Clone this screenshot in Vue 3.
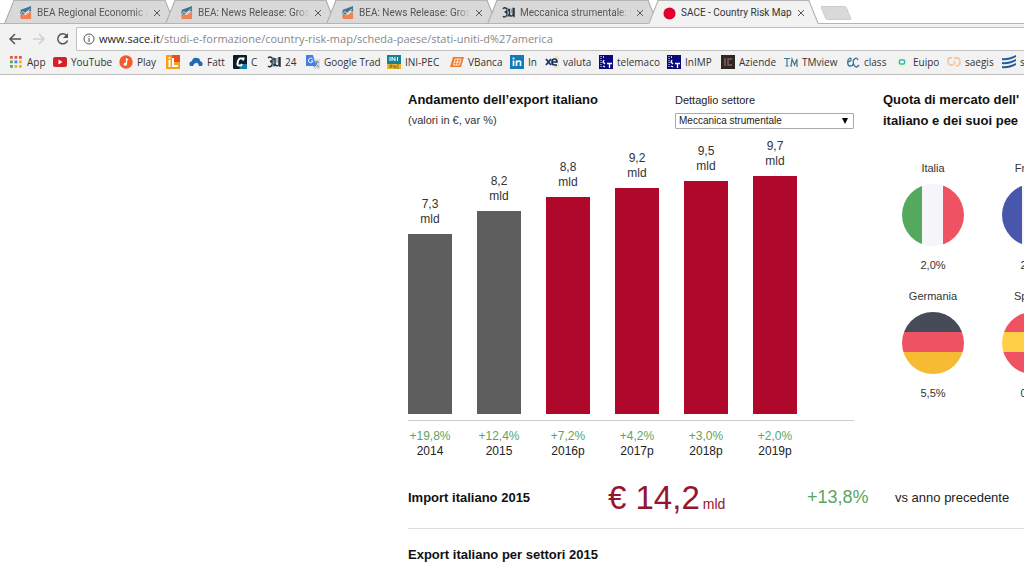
<script setup>
import { ref } from 'vue'

const tabs = [
  { title: 'BEA Regional Economic Accounts', icon: 'bea' },
  { title: 'BEA: News Release: Gross Domestic', icon: 'bea' },
  { title: 'BEA: News Release: Gross Domestic', icon: 'bea' },
  { title: 'Meccanica strumentale: il made', icon: 'sole' },
  { title: 'SACE - Country Risk Map', icon: 'sace', active: true },
]

const bookmarks = [
  { label: 'App', icon: 'apps', width: 44 },
  { label: 'YouTube', icon: 'youtube', width: 66 },
  { label: 'Play', icon: 'play', width: 47 },
  { label: '', icon: 'il', width: 23 },
  { label: 'Fatt', icon: 'cloud', width: 44 },
  { label: 'C', icon: 'c', width: 34 },
  { label: '24', icon: 'sole', width: 39 },
  { label: 'Google Trad', icon: 'translate', width: 81 },
  { label: 'INI-PEC', icon: 'ini', width: 63 },
  { label: 'VBanca', icon: 'vbanca', width: 60 },
  { label: 'In', icon: 'linkedin', width: 35 },
  { label: 'valuta', icon: 'xe', width: 54 },
  { label: 'telemaco', icon: 'telemaco', width: 68 },
  { label: 'InIMP', icon: 'telemaco', width: 54 },
  { label: 'Aziende', icon: 'ic', width: 63 },
  { label: 'TMview', icon: 'tm', width: 62 },
  { label: 'class', icon: 'ec', width: 49 },
  { label: 'Euipo', icon: 'euipo', width: 52 },
  { label: 'saegis', icon: 'saegis', width: 55 },
  { label: 'services', icon: 'waves', width: 60 },
]

const years = [
  { year: '2014', value: '7,3', change: '+19,8%', height: 180 },
  { year: '2015', value: '8,2', change: '+12,4%', height: 203 },
  { year: '2016p', value: '8,8', change: '+7,2%', height: 217, forecast: true },
  { year: '2017p', value: '9,2', change: '+4,2%', height: 226, forecast: true },
  { year: '2018p', value: '9,5', change: '+3,0%', height: 233, forecast: true },
  { year: '2019p', value: '9,7', change: '+2,0%', height: 238, forecast: true },
]

const peers = [
  { name: 'Italia', share: '2,0%', flag: 'italy' },
  { name: 'Francia', share: '2,1%', flag: 'france' },
  { name: 'Germania', share: '5,5%', flag: 'germany' },
  { name: 'Spagna', share: '0,6%', flag: 'spain' },
]

const sector = ref('Meccanica strumentale')
const address = 'www.sace.it/studi-e-formazione/country-risk-map/scheda-paese/stati-uniti-d%27america'
const host = address.slice(0, 11)
const path = address.slice(11)
const dots = [0, 1, 2, 3, 4, 5, 6, 7, 8]
const dotColors = ['#e2574c', '#e2574c', '#e2574c', '#4caf50', '#4285f4', '#f4b400', '#4caf50', '#f4b400', '#f4b400']
</script>

<template>
  <div class="window">
    <svg class="defs" width="0" height="0" aria-hidden="true">
      <symbol id="i-bea" viewBox="0 0 14 14">
        <path d="M2 4 8 2 13 0V6L9 5 5 9 1 10Z" fill="#3b7795" />
        <path d="M1 10 5 9 7 10 12 6 13 7V14H2Z" fill="#ef8354" />
        <path d="M1 10 4 6 7 8 12 3" fill="none" stroke="#e6dcd8" stroke-width="1" />
      </symbol>
      <symbol id="i-sole" viewBox="0 0 14 14">
        <path d="M1 3Q3 1 5 3T3 6.500Q7 7 5 10T1 11M7 3 5 8 8 11M8 3V9Q9 12 12 10V2M13 2V12" fill="none" stroke="#26343f" stroke-width="1.500" />
        <path d="M6 2V12M10 3V8" stroke="#688da0" stroke-width="1" />
      </symbol>
      <symbol id="i-sace" viewBox="0 0 14 14"><circle cx="7" cy="7" r="6.500" fill="#e4002b" /></symbol>
      <symbol id="i-apps" viewBox="0 0 14 14">
        <rect v-for="n in dots" :key="n" :x="1 + (n % 3) * 4.500" :y="1 + Math.floor(n / 3) * 4.500" width="2.800" height="2.800" :fill="dotColors[n]" />
      </symbol>
      <symbol id="i-youtube" viewBox="0 0 14 14"><rect y="2" width="14" height="10" rx="2" fill="#d3222a" /><path d="M5.500 4.500 9.500 7 5.500 9.500Z" fill="#fff" /></symbol>
      <symbol id="i-play" viewBox="0 0 14 14"><circle cx="7" cy="7" r="6.700" fill="#f45b28" /><path d="M7.500 3V9M7.500 3.500 9 5" stroke="#fff" fill="none" stroke-width="1.200" /><circle cx="6.300" cy="9.200" r="1.600" fill="#fff" /></symbol>
      <symbol id="i-il" viewBox="0 0 14 14"><path d="M0 0H14V14H0Z" fill="#f6a11c" /><path d="M6 0H14V7H6Z" fill="#e9501e" /><path d="M3.500 5V12M7 3V11H12" fill="none" stroke="#fff" stroke-width="2" /><circle cx="3.500" cy="3" r="1" fill="#fff" /></symbol>
      <symbol id="i-cloud" viewBox="0 0 14 14"><path d="M1 11Q-1 7 3 6Q4 2 8 3Q11 3 11 6Q15 7 13 11H10Q9 7 7 8Q5 8 4 11Z" fill="#2368b1" /></symbol>
      <symbol id="i-c" viewBox="0 0 14 14"><rect width="14" height="14" rx="1" fill="#0b1c2e" /><path d="M9 9H14V14H6Z" fill="#1380a5" /><path d="M10 5.500 10.500 3.500H7Q5 4 4.500 9Q4 11 8 10.500L9 9" fill="none" stroke="#fff" stroke-width="2" /></symbol>
      <symbol id="i-translate" viewBox="0 0 14 14"><path d="M5 4H14V14H8Z" fill="#d6dce5" /><path d="M8 7H13M11 6Q11 10 8 12M9 8Q11 11 13 12" stroke="#718096" fill="none" /><path d="M0 0H7L10 11H0Z" fill="#4280e8" /><path d="M6.500 4A2.300 2.300 0 1 0 7 6H5" stroke="#fff" fill="none" /></symbol>
      <symbol id="i-ini" viewBox="0 0 14 14"><path d="M0 0H14V9H0Z" fill="#138394" /><path d="M0 9H14V14H0Z" fill="#e7b52b" /><path d="M3 2V6M5 6V2L8 6V2M10.500 2V6" stroke="#fff" fill="none" /><path d="M3 13V10H5V12H3M7 10V13H9M7 11.500H9M12 10H10V13H12" stroke="#715d22" fill="none" stroke-width=".7" /></symbol>
      <symbol id="i-vbanca" viewBox="0 0 14 14"><path d="M3 2H14L11 12H0Z" fill="#ef792d" /><path d="M5 4H11L9.500 10H3.500ZM8 4 6.500 10M4.500 7H10" fill="none" stroke="#fff" stroke-width=".8" /></symbol>
      <symbol id="i-linkedin" viewBox="0 0 14 14"><rect width="14" height="14" fill="#1479b8" /><path d="M3.500 5.500V11M6.500 11V5.500M6.500 8Q7 6 9 6T10.500 8V11" fill="none" stroke="#fff" stroke-width="1.700" /><circle cx="3.500" cy="3.500" r="1" fill="#fff" /></symbol>
      <symbol id="i-xe" viewBox="0 0 14 14"><path d="M10 2A5 5 0 0 1 10 12" fill="none" stroke="#edcc62" /><path d="M1 4 6 10M6 4 1 10M7 7H12Q12 4 9.500 4T7 7Q7 10 9.500 10H12" fill="none" stroke="#19305b" stroke-width="1.700" /></symbol>
      <symbol id="i-telemaco" viewBox="0 0 14 14"><path d="M0 0H14V14H0Z" fill="#07087c" /><path d="M2 1V13" stroke="#fff" stroke-dasharray="1 1" /><path d="M4 2H5M5 5 4 7 6 9M4 11 6 12M8 8.500H13M10.500 8.500V13" fill="none" stroke="#fff" stroke-width="1.300" /></symbol>
      <symbol id="i-ic" viewBox="0 0 14 14"><path d="M0 0H14V14H0Z" fill="#302724" /><path d="M4 3V11M11 4H7V10H11" fill="none" stroke="#806159" stroke-width="1.500" /></symbol>
      <symbol id="i-tm" viewBox="0 0 14 14"><path d="M0 3.500H6M3 3.500V11M1.500 11H4.500M7 11 8 4 10.500 10 13 4V11M6 11H8M12 11H14" fill="none" stroke="#447b98" stroke-width="1.200" /></symbol>
      <symbol id="i-ec" viewBox="0 0 14 14"><path d="M1.500 7Q6 6 5 4T2 5Q1 11 4 11T7 9M12 5Q11 2 8.500 4T8 10T13 10" fill="none" stroke="#376f91" stroke-width="1.300" /></symbol>
      <symbol id="i-euipo" viewBox="0 0 14 14"><circle cx="7" cy="7" r="5.500" fill="#eef6d0" /><rect x="4.500" y="5" width="5" height="4" rx="1" fill="#fff" stroke="#35b5c6" stroke-width="1.500" /></symbol>
      <symbol id="i-saegis" viewBox="0 0 14 14"><path d="M5 3H3Q1 3 1 6T3 10H6M7 10Q8 8 7 6M7 3H11Q13 4 13 7T10 11H9" fill="none" stroke="#f7c7a0" stroke-width="1.800" /></symbol>
      <symbol id="i-waves" viewBox="0 0 14 14"><path d="M0 3Q5 4 14 0V2Q6 6 0 5ZM0 7Q5 8 14 4V6Q6 10 0 9ZM0 11Q5 12 14 8V10Q6 14 0 13Z" fill="#245b9f" /></symbol>
    </svg>

    <header class="browser">
      <nav class="tabs" aria-label="Schede">
        <div v-for="(tab, i) in tabs" :key="i" class="tab" :class="{ active: tab.active }">
          <svg class="favicon"><use :href="'#i-' + tab.icon" /></svg>
          <a class="tab-title" href="#">{{ tab.title }}</a>
          <button class="close" aria-label="Chiudi scheda"><svg viewBox="0 0 8 8"><path d="M1 1 7 7M7 1 1 7" /></svg></button>
        </div>
        <button class="new-tab" aria-label="Nuova scheda"></button>
      </nav>

      <div class="toolbar">
        <div class="nav-group">
          <button class="nav" aria-label="Indietro"><svg viewBox="0 0 14 14"><path d="M13 7H2M7 2 2 7 7 12" /></svg></button>
          <button class="nav disabled" aria-label="Avanti"><svg viewBox="0 0 14 14"><path d="M1 7H12M7 2 12 7 7 12" /></svg></button>
          <button class="nav" aria-label="Ricarica"><svg viewBox="0 0 14 14"><path d="M10.500 3.500A5 5 0 1 0 11.500 8.500" /><path class="tip" d="M12 1V6H7Z" /></svg></button>
        </div>
        <div class="address">
          <svg class="info" viewBox="0 0 12 12"><circle cx="6" cy="6" r="5" /><path d="M6 5V9M6 3V4" /></svg>
          <a class="url" href="#"><span class="host">{{ host }}</span>{{ path }}</a>
        </div>
      </div>

      <nav class="bookmarks" aria-label="Preferiti">
        <a v-for="b in bookmarks" :key="b.label" class="bookmark" href="#" :style="{ width: b.width + 'px' }">
          <svg class="bookmark-icon"><use :href="'#i-' + b.icon" /></svg>
          <span>{{ b.label }}</span>
        </a>
      </nav>
    </header>

    <main class="page">
      <div class="overview">
        <section class="export">
          <div class="export-head">
            <div>
              <h2>Andamento dell’export italiano</h2>
              <p class="unit">(valori in €, var %)</p>
            </div>
            <div class="sector">
              <label for="sector">Dettaglio settore</label>
              <div class="select-box">
                <select id="sector" v-model="sector"><option>Meccanica strumentale</option></select>
                <svg class="arrow" viewBox="0 0 6 6"><path d="M0 0H6L3 6Z" /></svg>
              </div>
            </div>
          </div>
          <div class="bars">
            <div v-for="y in years" :key="y.year" class="column">
              <div class="value">{{ y.value }}<br />mld</div>
              <div class="bar" :class="{ forecast: y.forecast }" :style="{ height: y.height + 'px' }"></div>
            </div>
          </div>
          <div class="axis">
            <div v-for="y in years" :key="y.year" class="tick">
              <div class="change">{{ y.change }}</div>
              <div>{{ y.year }}</div>
            </div>
          </div>
        </section>

        <section class="share">
          <h2>Quota di mercato dell'<br />italiano e dei suoi pee</h2>
          <div class="peers">
            <div v-for="p in peers" :key="p.name" class="peer">
              <div class="peer-text">{{ p.name }}</div>
              <div class="flag" :class="p.flag"></div>
              <div class="peer-text">{{ p.share }}</div>
            </div>
          </div>
        </section>
      </div>

      <section class="import">
        <h2>Import italiano 2015</h2>
        <div class="amount">€ 14,2<small>mld</small></div>
        <div class="growth">+13,8%</div>
        <div class="versus">vs anno precedente</div>
      </section>

      <section class="sectors"><h2>Export italiano per settori 2015</h2></section>
    </main>
  </div>
</template>

<style>
body { margin: 0; background: #fff; }
</style>

<style scoped>
.window { min-height: 100vh; overflow: hidden; background: #fff; color: #222; font-family: "Liberation Sans", Arial, sans-serif; }
.defs { position: absolute; }
button { border: 0; padding: 0; background: none; }
a { color: inherit; text-decoration: none; }
h2, p { margin: 0; }
h2 { color: #111; font-size: 13px; line-height: 21px; font-weight: 700; white-space: nowrap; }
.browser { background: #f2f2f2; border-bottom: 1px solid #bdbdbd; font-family: "Open Sans", "Noto Sans", sans-serif; }

.tabs { display: flex; height: 23px; padding-left: 4px; background: #fff; border-bottom: 1px solid #b5b5b5; }
.tab { position: relative; z-index: 0; flex: none; display: flex; align-items: center; box-sizing: border-box; width: 171px; height: 23px; margin-right: -10px; padding: 2px 14px 0 15px; color: #555; }
.tab::before, .tab::after { content: ""; position: absolute; z-index: -1; top: 0; bottom: 0; box-sizing: border-box; background: #d9d9d9; border-top: 1px solid #b5b5b5; }
.tab::before { left: 5px; right: 40%; border-left: 1px solid #a8a8a8; transform: skewX(-22deg); }
.tab::after { left: 40%; right: 5px; border-right: 1px solid #a8a8a8; transform: skewX(22deg); }
.tab.active { z-index: 1; height: 24px; color: #333; }
.tab.active::before, .tab.active::after { background: #f2f2f2; }
.favicon { width: 13px; height: 13px; margin-right: 5px; flex: none; }
.tab-title { flex: 1; overflow: hidden; white-space: nowrap; font-family: Roboto, sans-serif; font-size: 10px; line-height: 14px; mask-image: linear-gradient(to right, #000 88%, transparent); }
.active .tab-title { mask-image: none; }
.close { width: 8px; height: 8px; margin-left: 5px; display: flex; }
.close svg { width: 8px; height: 8px; fill: none; stroke: #555; }
.new-tab { width: 26px; height: 14px; margin: 6px 0 0 14px; border: 1px solid #ccc; border-radius: 2px; background: #d9d9d9; transform: skewX(22deg); }

.toolbar { display: flex; align-items: center; padding: 3px 0 0 8px; gap: 6px; }
.nav-group { display: flex; gap: 10px; }
.nav { width: 14px; height: 14px; display: flex; }
.nav svg { width: 14px; height: 14px; fill: none; stroke: #555; stroke-width: 1.500; }
.nav .tip { fill: #555; stroke: none; }
.nav.disabled svg { stroke: #d0d0d0; }
.address { flex: 1; display: flex; align-items: center; gap: 4px; height: 22px; padding-left: 6px; background: #fff; border: 1px solid #c0c0c0; border-right: 0; border-radius: 2px 0 0 2px; }
.info { width: 12px; height: 12px; fill: none; stroke: #555; }
.url { color: #888; font-size: 11px; line-height: 16px; white-space: nowrap; }
.host { color: #222; }

.bookmarks { display: flex; padding: 4px 0 5px 9px; }
.bookmark { flex: none; display: flex; align-items: center; gap: 4px; color: #333; font-size: 10px; line-height: 14px; white-space: nowrap; }
.bookmark-icon { flex: none; width: 14px; height: 14px; }

.page { padding: 14px 0 0 408px; }
.overview { display: flex; gap: 29px; }
.export { flex: none; width: 446px; }
.export-head { display: flex; justify-content: space-between; }
.unit { font-size: 11px; line-height: 21px; color: #333; }
.sector { width: 179px; font-size: 11px; }
.sector label { display: block; line-height: 23px; }
.select-box { position: relative; margin-top: 1px; }
.select-box select { display: block; appearance: none; width: 100%; height: 16px; padding: 0 3px; border: 1px solid #aaa; border-radius: 1px; background: #fff; color: #222; font: 10px/14px "Liberation Sans", Arial, sans-serif; }
.arrow { position: absolute; right: 6px; top: 5px; width: 6px; height: 6px; }
.bars { display: flex; align-items: flex-end; gap: 25px; height: 283px; padding-bottom: 6px; border-bottom: 1px solid #ccc; }
.column, .tick { width: 44px; text-align: center; font-size: 12px; line-height: 15px; }
.value { color: #333; padding-bottom: 7px; }
.bar { background: #5e5e5e; }
.bar.forecast { background: #b0082a; }
.axis { display: flex; gap: 25px; padding-top: 8px; }
.change { color: #5da463; }

.peers { display: grid; grid-template-columns: 62px 62px; column-gap: 38px; row-gap: 17px; padding: 30px 0 0 19px; }
.peer-text { font-size: 11px; line-height: 14px; text-align: center; white-space: nowrap; color: #333; }
.flag { width: 62px; height: 62px; margin: 9px 0 12px; border-radius: 50%; }
.italy { background: linear-gradient(to right, #54a95e 32%, #f5f5fa 32% 66%, #ef5363 66%); }
.france { background: linear-gradient(to right, #4857ab 32%, #f5f5fa 32% 66%, #ef5363 66%); }
.germany { background: linear-gradient(#464b58 32%, #ef5363 32% 65%, #f6bb32 65%); }
.spain { background: linear-gradient(#ef5363 32%, #ffcf45 32% 65%, #ef5363 65%); }

.import { display: grid; grid-template-columns: 200px 199px 88px 1fr; align-items: center; height: 62px; margin-top: 7px; border-bottom: 1px solid #ddd; }
.amount { padding-top: 7px; color: #96142f; font-size: 33px; line-height: 40px; white-space: nowrap; }
.amount small { margin-left: 3px; font-size: 14px; }
.growth { color: #5da463; font-size: 18px; }
.versus { font-size: 13px; white-space: nowrap; }
.sectors { padding-top: 15px; }
</style>
